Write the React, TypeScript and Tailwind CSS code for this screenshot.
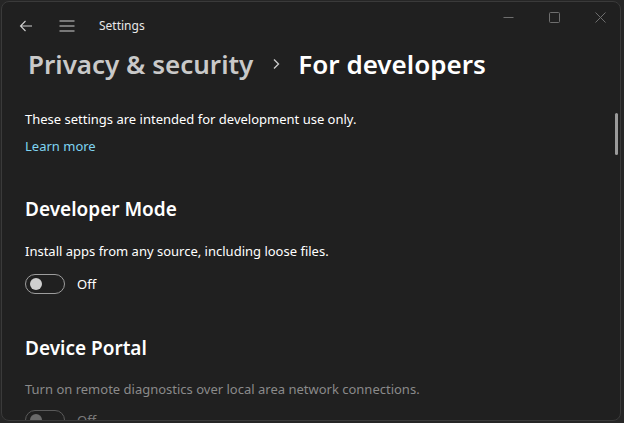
import React from "react";

const font = { fontFamily: '"Noto Sans", "Open Sans", sans-serif' };

const Toggle: React.FC<{ disabled?: boolean }> = ({ disabled }) => (
  <div className="flex items-center gap-[12px]">
    <div
      className={
        "w-[40px] h-[20px] rounded-full border flex items-center px-[4px] " +
        (disabled ? "border-[#5a5a5a]" : "border-[#9d9d9d]")
      }
    >
      <div className={"w-[12px] h-[12px] rounded-full " + (disabled ? "bg-[#6a6a6a]" : "bg-[#cfcfcf]")} />
    </div>
    <span className={"text-[13px] leading-[20px] " + (disabled ? "text-[#7a7a7a]" : "text-white")}>Off</span>
  </div>
);

export default function App() {
  return (
    <div className="w-[624px] h-[423px] bg-[#262626] overflow-hidden" style={font}>
      <div className="relative ml-[1px] mt-[1px] w-[620px] h-[420px] rounded-[8px] border border-[#3a3a3a] bg-[#202020] overflow-hidden">
        {/* title bar */}
        <div className="flex items-center h-[48px]">
          <svg className="ml-[17px]" width="14" height="14" viewBox="0 0 14 14" fill="none" stroke="#cfcfcf" strokeWidth="1.1">
            <path d="M13 7H1.5M6.5 2L1.5 7l5 5" />
          </svg>
          <svg className="ml-[26px]" width="16" height="12" viewBox="0 0 16 12" fill="none" stroke="#cfcfcf" strokeWidth="1.1">
            <path d="M0.5 1h15M0.5 6h15M0.5 11h15" />
          </svg>
          <span className="ml-[24px] text-[12px] text-[#e8e8e8]">Settings</span>
          <div className="ml-auto flex items-center mr-[14px] -mt-[18px] gap-[35px]">
            <svg width="11" height="11" viewBox="0 0 11 11" stroke="#6e6e6e" strokeWidth="1">
              <path d="M0.5 5.5h10" />
            </svg>
            <svg width="11" height="11" viewBox="0 0 11 11" fill="none" stroke="#6e6e6e" strokeWidth="1">
              <rect x="0.5" y="0.5" width="10" height="10" rx="1" />
            </svg>
            <svg width="11" height="11" viewBox="0 0 11 11" stroke="#6e6e6e" strokeWidth="1">
              <path d="M0.5 0.5l10 10M10.5 0.5l-10 10" />
            </svg>
          </div>
        </div>

        {/* breadcrumb */}
        <div className="flex items-center h-[40px] -mt-[6px] pl-[26px] text-[26px] font-semibold leading-[40px]">
          <span className="text-[#c9c9c9]">Privacy &amp; security</span>
          <svg className="ml-[19px] mr-[18px]" width="8" height="12" viewBox="0 0 8 12" fill="none" stroke="#c9c9c9" strokeWidth="1.4">
            <path d="M2 1.5l4.5 4.5L2 10.5" />
          </svg>
          <span className="text-white">For developers</span>
        </div>

        <div className="pl-[23px] flex flex-col items-start">
          <p className="mt-[25px] text-[13px] leading-[20px] text-white">
            These settings are intended for development use only.
          </p>
          <p className="mt-[7px] text-[13px] leading-[20px] text-[#7fd4f2]">Learn more</p>

          <h2 className="mt-[39px] text-[19px] leading-[28px] font-semibold text-white">Developer Mode</h2>
          <p className="mt-[18px] text-[13px] leading-[20px] text-white">
            Install apps from any source, including loose files.
          </p>
          <div className="mt-[13px]">
            <Toggle />
          </div>

          <h2 className="mt-[40px] text-[19px] leading-[28px] font-semibold text-white">Device Portal</h2>
          <p className="mt-[17px] text-[13px] leading-[20px] text-[#8a8a8a]">
            Turn on remote diagnostics over local area network connections.
          </p>
          <div className="mt-[11px]">
            <Toggle disabled />
          </div>
        </div>

        {/* scrollbar */}
        <div className="absolute right-[2px] top-[111px] w-[3px] h-[42px] rounded-full bg-[#9a9a9a]" />
      </div>
    </div>
  );
}
